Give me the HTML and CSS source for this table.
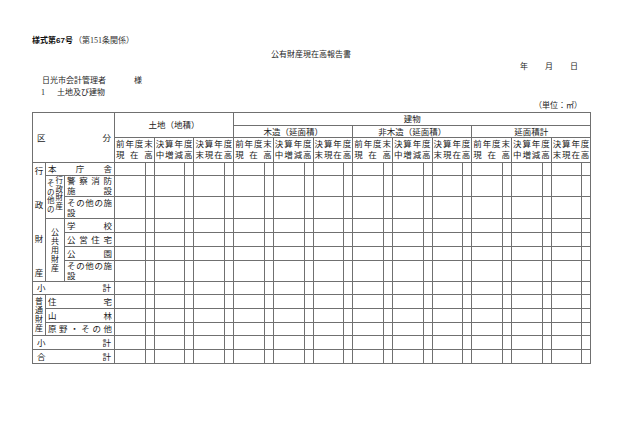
FILE: index.html
```html
<!DOCTYPE html>
<html lang="ja">
<head>
<meta charset="utf-8">
<title>公有財産現在高報告書</title>
<link rel="stylesheet" href="styles.css">
</head>
<body>
<div class="page">
  <p class="form-no"><b>様式第67号</b><span>（第151条関係）</span></p>
  <h1 class="title">公有財産現在高報告書</h1>
  <p class="date"><span>年</span><span>月</span><span>日</span></p>
  <p class="addressee"><span class="name">日光市会計管理者</span><span>様</span></p>
  <p class="section"><span class="num">1</span><span>土地及び建物</span></p>
  <p class="unit">（単位：㎡）</p>
  <table class="report">
    <colgroup>
      <col class="c1"><col class="c2"><col class="c3">
      <col class="cw"><col class="cn"><col class="cw"><col class="cn"><col class="cw"><col class="cn">
      <col class="cw"><col class="cn"><col class="cw"><col class="cn"><col class="cw"><col class="cn">
      <col class="cw"><col class="cn"><col class="cw"><col class="cn"><col class="cw"><col class="cn">
      <col class="cw"><col class="cn"><col class="cw"><col class="cn"><col class="cw"><col class="cn">
    </colgroup>
    <thead>
      <tr class="h1">
        <th colspan="3" rowspan="3" class="dist kubun">区分</th>
        <th colspan="6" rowspan="2">土地（地積）</th>
        <th colspan="18">建物</th>
      </tr>
      <tr class="h2">
        <th colspan="6">木造（延面積）</th>
        <th colspan="6">非木造（延面積）</th>
        <th colspan="6">延面積計</th>
      </tr>
      <tr class="h3">
        <th colspan="2" class="dist lbl">前年度末<br>現在高</th>
        <th colspan="2" class="dist lbl">決算年度<br>中増減高</th>
        <th colspan="2" class="dist lbl">決算年度<br>末現在高</th>
        <th colspan="2" class="dist lbl">前年度末<br>現在高</th>
        <th colspan="2" class="dist lbl">決算年度<br>中増減高</th>
        <th colspan="2" class="dist lbl">決算年度<br>末現在高</th>
        <th colspan="2" class="dist lbl">前年度末<br>現在高</th>
        <th colspan="2" class="dist lbl">決算年度<br>中増減高</th>
        <th colspan="2" class="dist lbl">決算年度<br>末現在高</th>
        <th colspan="2" class="dist lbl">前年度末<br>現在高</th>
        <th colspan="2" class="dist lbl">決算年度<br>中増減高</th>
        <th colspan="2" class="dist lbl">決算年度<br>末現在高</th>
      </tr>
    </thead>
    <tbody>
      <tr class="r13">
        <td rowspan="7" class="side"><div class="spread"><span>行</span><span>政</span><span>財</span><span>産</span></div></td>
        <td colspan="2" class="dist item">本庁舎</td>
        <td></td><td></td><td></td><td></td><td></td><td></td><td></td><td></td><td></td><td></td><td></td><td></td>
        <td></td><td></td><td></td><td></td><td></td><td></td><td></td><td></td><td></td><td></td><td></td><td></td>
      </tr>
      <tr class="r21">
        <td rowspan="2" class="sub"><div class="twin"><div class="col-l">そ<br>の<br>他<br>の</div><div class="col-r">行<br>政<br>財<br>産</div></div></td>
        <td class="dist item">警察消防<br>施設</td>
        <td></td><td></td><td></td><td></td><td></td><td></td><td></td><td></td><td></td><td></td><td></td><td></td>
        <td></td><td></td><td></td><td></td><td></td><td></td><td></td><td></td><td></td><td></td><td></td><td></td>
      </tr>
      <tr class="r22">
        <td class="dist item">その他の施<br>設</td>
        <td></td><td></td><td></td><td></td><td></td><td></td><td></td><td></td><td></td><td></td><td></td><td></td>
        <td></td><td></td><td></td><td></td><td></td><td></td><td></td><td></td><td></td><td></td><td></td><td></td>
      </tr>
      <tr class="r14">
        <td rowspan="4" class="sub"><div class="stack">公<br>共<br>用<br>財<br>産</div></td>
        <td class="dist item">学校</td>
        <td></td><td></td><td></td><td></td><td></td><td></td><td></td><td></td><td></td><td></td><td></td><td></td>
        <td></td><td></td><td></td><td></td><td></td><td></td><td></td><td></td><td></td><td></td><td></td><td></td>
      </tr>
      <tr class="r14">
        <td class="dist item">公営住宅</td>
        <td></td><td></td><td></td><td></td><td></td><td></td><td></td><td></td><td></td><td></td><td></td><td></td>
        <td></td><td></td><td></td><td></td><td></td><td></td><td></td><td></td><td></td><td></td><td></td><td></td>
      </tr>
      <tr class="r14">
        <td class="dist item">公園</td>
        <td></td><td></td><td></td><td></td><td></td><td></td><td></td><td></td><td></td><td></td><td></td><td></td>
        <td></td><td></td><td></td><td></td><td></td><td></td><td></td><td></td><td></td><td></td><td></td><td></td>
      </tr>
      <tr class="r20">
        <td class="dist item">その他の施<br>設</td>
        <td></td><td></td><td></td><td></td><td></td><td></td><td></td><td></td><td></td><td></td><td></td><td></td>
        <td></td><td></td><td></td><td></td><td></td><td></td><td></td><td></td><td></td><td></td><td></td><td></td>
      </tr>
      <tr class="r13">
        <td colspan="3" class="dist total">小計</td>
        <td></td><td></td><td></td><td></td><td></td><td></td><td></td><td></td><td></td><td></td><td></td><td></td>
        <td></td><td></td><td></td><td></td><td></td><td></td><td></td><td></td><td></td><td></td><td></td><td></td>
      </tr>
      <tr class="r14">
        <td rowspan="3" class="side"><div class="stack">普<br>通<br>財<br>産</div></td>
        <td colspan="2" class="dist item">住宅</td>
        <td></td><td></td><td></td><td></td><td></td><td></td><td></td><td></td><td></td><td></td><td></td><td></td>
        <td></td><td></td><td></td><td></td><td></td><td></td><td></td><td></td><td></td><td></td><td></td><td></td>
      </tr>
      <tr class="r14">
        <td colspan="2" class="dist item">山林</td>
        <td></td><td></td><td></td><td></td><td></td><td></td><td></td><td></td><td></td><td></td><td></td><td></td>
        <td></td><td></td><td></td><td></td><td></td><td></td><td></td><td></td><td></td><td></td><td></td><td></td>
      </tr>
      <tr class="r13">
        <td colspan="2" class="dist item">原野・その他</td>
        <td></td><td></td><td></td><td></td><td></td><td></td><td></td><td></td><td></td><td></td><td></td><td></td>
        <td></td><td></td><td></td><td></td><td></td><td></td><td></td><td></td><td></td><td></td><td></td><td></td>
      </tr>
      <tr class="r14">
        <td colspan="3" class="dist total">小計</td>
        <td></td><td></td><td></td><td></td><td></td><td></td><td></td><td></td><td></td><td></td><td></td><td></td>
        <td></td><td></td><td></td><td></td><td></td><td></td><td></td><td></td><td></td><td></td><td></td><td></td>
      </tr>
      <tr class="r14">
        <td colspan="3" class="dist total">合計</td>
        <td></td><td></td><td></td><td></td><td></td><td></td><td></td><td></td><td></td><td></td><td></td><td></td>
        <td></td><td></td><td></td><td></td><td></td><td></td><td></td><td></td><td></td><td></td><td></td><td></td>
      </tr>
    </tbody>
  </table>
</div>
</body>
</html>
```

FILE: styles.css
```css
* {
  box-sizing: border-box;
}

html,
body {
  margin: 0;
  padding: 0;
  background: #ffffff;
}

body {
  font-family: "Liberation Serif", "Noto Sans CJK JP", serif;
  color: #1e1e1e;
  font-size: 8px;
  line-height: 12px;
}

.page {
  width: 630px;
  height: 441px;
  padding: 35px 40px 0 32px;
  overflow: hidden;
}

.form-no,
.title,
.date,
.addressee,
.section,
.unit {
  margin: 0;
  height: 12px;
  font-size: 8px;
  font-weight: normal;
  line-height: 12px;
  white-space: nowrap;
}

.form-no {
  display: flex;
}

.form-no b {
  font-family: "Liberation Sans", "Noto Sans CJK JP", sans-serif;
  font-weight: 700;
  color: #111111;
}

.form-no span {
  color: #333333;
  margin-left: 1px;
}

.title {
  margin-top: 2px;
  text-align: center;
}

.date {
  display: flex;
  justify-content: flex-end;
  gap: 17px;
  padding-right: 12px;
}

.addressee {
  display: flex;
  margin-top: 2px;
  padding-left: 10px;
}

.addressee .name {
  width: 92px;
}

.section {
  display: flex;
  padding-left: 9px;
}

.section .num {
  width: 16px;
}

.unit {
  margin-top: 1px;
  text-align: right;
  padding-right: 8px;
}

/* table */
.report {
  border-collapse: collapse;
  table-layout: fixed;
  width: 559px;
  font-size: 8.5px;
  line-height: 10px;
  color: #222222;
}

.report th,
.report td {
  border: 1px solid #707070;
  padding: 0;
  font-weight: normal;
  text-align: center;
  vertical-align: middle;
  overflow: hidden;
  white-space: nowrap;
}

.c1 { width: 13px; }
.c2 { width: 19px; }
.c3 { width: 50px; }
.cw { width: 30.7px; }
.cn { width: 9px; }

.h1 { height: 13px; }
.h2 { height: 12px; }
.h3 { height: 25px; }

.r13 { height: 13px; }
.r14 { height: 14px; }
.r20 { height: 20px; }
.r21 { height: 21px; }
.r22 { height: 22px; }

.report .dist {
  text-align: justify;
  text-align-last: justify;
}

.report .kubun {
  padding: 0 3px 0 4px;
}

.report .lbl {
  padding: 0 1px;
  line-height: 11px;
}

.report .item {
  padding: 0 2px;
}

.report .total {
  padding: 0 3px 0 4px;
}

.spread {
  display: flex;
  flex-direction: column;
  justify-content: space-between;
  align-items: center;
  height: 112px;
}

.stack {
  font-size: 8px;
  line-height: 9px;
}

.twin {
  display: flex;
  justify-content: center;
  gap: 1px;
  font-size: 7.5px;
  line-height: 8.5px;
}

.twin .col-r {
  margin-top: -3px;
}
```
